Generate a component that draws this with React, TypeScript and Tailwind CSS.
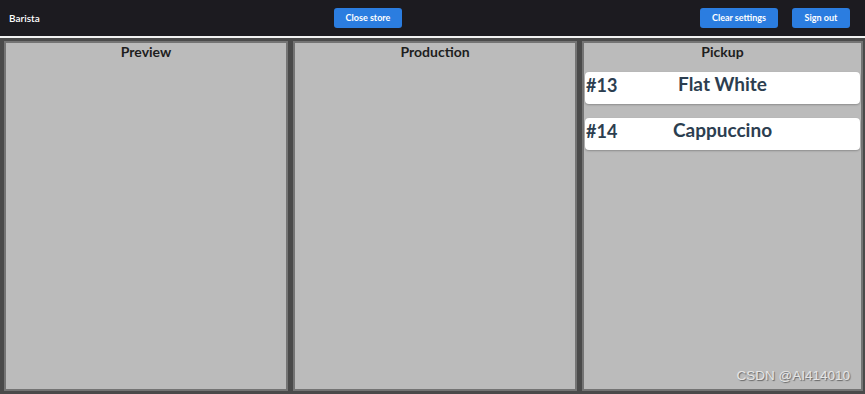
import React from "react";

const font = { fontFamily: '"Source Sans Pro", Lato, "Noto Sans", sans-serif' };

function Panel({ title, children }: { title: string; children?: React.ReactNode }) {
  return (
    <div className="flex flex-col bg-[#bbbbbb] border-2 border-[#747474] min-h-0">
      <div className="text-center text-[14px] font-bold text-[#1e1e1e] leading-[18px] pb-[11px]">{title}</div>
      <div className="flex flex-col gap-[14px] pl-[1px] pr-[1px]">{children}</div>
    </div>
  );
}

function Card({ num, name }: { num: string; name: string }) {
  return (
    <div className="relative h-[32px] bg-white rounded-[4px] shadow-[0_1px_2px_rgba(0,0,0,0.25)] flex items-center justify-center text-[#2c3e50] font-bold text-[19px]">
      <span className="absolute left-[1px] top-[2px] leading-[22px] text-[18px]">{num}</span>
      <span className="leading-[22px] -mt-[8px]">{name}</span>
    </div>
  );
}

export default function App() {
  return (
    <div className="w-[865px] h-[394px] flex flex-col bg-[#4a4a4a] overflow-hidden relative" style={font}>
      <div className="h-[36px] bg-[#1c1b20] flex items-center px-[9px] shrink-0">
        <div className="w-[325px] text-white text-[10px] font-semibold">Barista</div>
        <button className="w-[68px] h-[20px] bg-[#2b7de0] rounded-[3px] text-white text-[9px] font-bold">Close store</button>
        <div className="flex-1" />
        <button className="w-[78px] h-[20px] bg-[#2b7de0] rounded-[3px] text-white text-[9px] font-bold">Clear settings</button>
        <button className="ml-[14px] mr-[6px] w-[58px] h-[20px] bg-[#2b7de0] rounded-[3px] text-white text-[9px] font-bold">Sign out</button>
      </div>
      <div className="h-[2px] bg-[#f2f2f2] shrink-0" />
      <div className="flex-1 grid grid-cols-[284px_284px_281px] gap-[5px] pl-[4px] pr-[4px] pt-[3px] pb-[3px]">
        <Panel title="Preview" />
        <Panel title="Production" />
        <Panel title="Pickup">
          <Card num="#13" name="Flat White" />
          <Card num="#14" name="Cappuccino" />
        </Panel>
      </div>
      <div className="absolute right-[15px] bottom-[8px] text-[13.5px] text-[#e6e6e6] [text-shadow:1px_1px_1px_#666]" style={{ fontFamily: '"Liberation Sans", Arial, sans-serif' }}>
        CSDN @AI414010
      </div>
    </div>
  );
}
